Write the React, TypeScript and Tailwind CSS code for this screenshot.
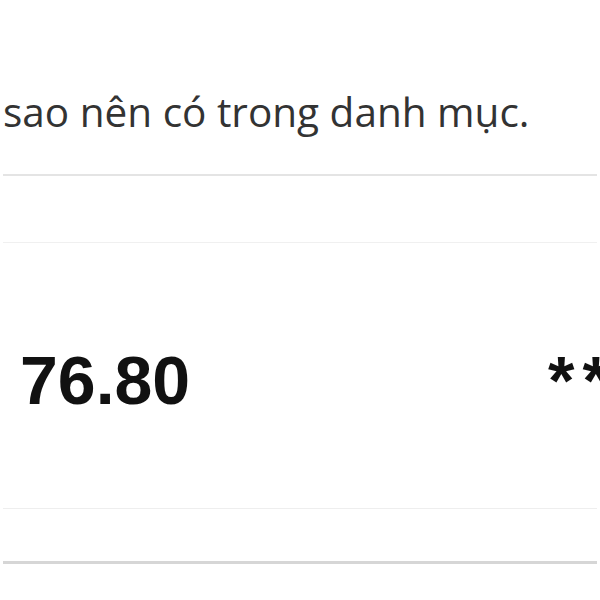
export default function App() {
  return (
    <div className="w-[600px] h-[600px] bg-white overflow-hidden">
      {/* description line, cut from a longer paragraph */}
      <p
        className="pt-[88px] pl-[3px] text-[40.5px] leading-[48px] text-[#333333] whitespace-nowrap"
        style={{ fontFamily: '"Open Sans", "Noto Sans", sans-serif' }}
      >
        sao nên có trong danh mục.
      </p>

      <div className="mt-[38px] mx-[3px] border-t-2 border-[#e4e4e4]">
        <div className="h-[67px] border-b border-[#f0f0f0]" />
        <div
          className="h-[266px] border-b border-[#eeeeee] grid grid-cols-[528px_1fr] items-start pl-[17px] pt-[103px] text-[68px] leading-[68px] font-bold text-[#111111] whitespace-nowrap"
          style={{ fontFamily: '"Liberation Sans", Arial, sans-serif' }}
        >
          <span>76.80</span>
          <span className="tracking-[8px]">**</span>
        </div>
        <div className="h-[55px] border-b-[3px] border-[#d6d6d6]" />
      </div>
    </div>
  )
}
